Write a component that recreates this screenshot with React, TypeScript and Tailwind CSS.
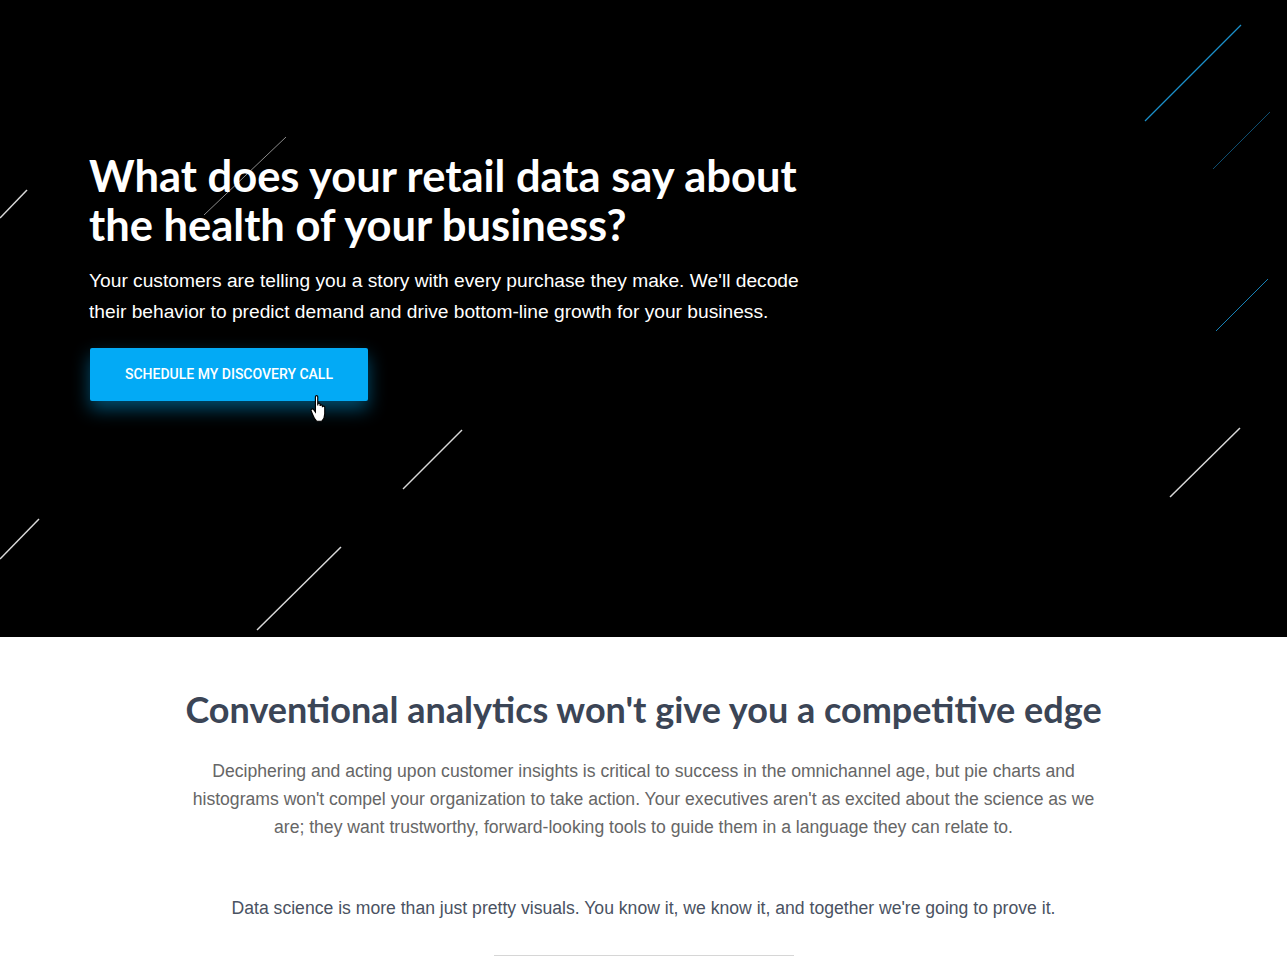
import React from "react";

const lines = [
  { x1: 0, y1: 218, x2: 27, y2: 190, c: "#d9d9d9", w: 1.5 },
  { x1: 204, y1: 215, x2: 286, y2: 137, c: "#8a8a8a", w: 1 },
  { x1: 403, y1: 489, x2: 462, y2: 430, c: "#d9d9d9", w: 1.5 },
  { x1: 0, y1: 559, x2: 39, y2: 519, c: "#d9d9d9", w: 1.5 },
  { x1: 257, y1: 630, x2: 341, y2: 547, c: "#d9d9d9", w: 1.5 },
  { x1: 1170, y1: 497, x2: 1240, y2: 428, c: "#d9d9d9", w: 1.5 },
  { x1: 1145, y1: 121, x2: 1241, y2: 25, c: "#1b8fc9", w: 1.2 },
  { x1: 1213, y1: 169, x2: 1270, y2: 112, c: "#0f4e70", w: 1 },
  { x1: 1216, y1: 331, x2: 1268, y2: 279, c: "#1680b5", w: 1 },
];

function Streaks() {
  return (
    <svg
      className="absolute inset-0 pointer-events-none"
      width="1287"
      height="637"
      viewBox="0 0 1287 637"
    >
      {lines.map((l, i) => (
        <line
          key={i}
          x1={l.x1}
          y1={l.y1}
          x2={l.x2}
          y2={l.y2}
          stroke={l.c}
          strokeWidth={l.w}
        />
      ))}
    </svg>
  );
}

// pointer cursor caught in the screenshot
function HandCursor() {
  return (
    <svg
      className="absolute left-[220px] top-[47px] pointer-events-none"
      width="19"
      height="28"
      viewBox="0 0 16 24"
    >
      <path
        d="M4.5 1.5 Q4.5 0.5 5.5 0.5 Q6.5 0.5 6.5 1.5 V9 V8 Q6.5 7 7.5 7 Q8.5 7 8.5 8 V9.5 Q8.5 8.5 9.5 8.5 Q10.5 8.5 10.5 9.5 V10.5 Q10.5 9.5 11.5 9.5 Q12.5 9.5 12.5 10.5 V16 Q12.5 20 10 22.5 H5.5 Q3.5 20.5 2 16.5 L0.8 13.5 Q0.5 12.5 1.5 12 Q2.5 11.8 3 12.5 L4.5 14.5 Z"
        fill="#fff"
        stroke="#000"
        strokeWidth="1"
      />
    </svg>
  );
}

export default function App() {
  return (
    <div className="w-full bg-white">
      <section className="relative h-[637px] bg-black overflow-hidden">
        <Streaks />
        <div className="relative pl-[89px] pt-[151px]">
          <h1 className="font-['Lato',sans-serif] font-bold text-[43.5px] leading-[49px] text-white">
            What does your retail data say about
            <br />
            the health of your business?
          </h1>
          <p className="mt-[16px] font-['Liberation_Sans',Arial,sans-serif] text-[19.2px] leading-[31px] text-white">
            Your customers are telling you a story with every purchase they make. We'll decode
            <br />
            their behavior to predict demand and drive bottom-line growth for your business.
          </p>
          <div className="relative mt-[21px] ml-px w-[278px]">
            <button className="w-[278px] h-[53px] rounded-[2px] bg-[#03aaf5] text-white font-['Roboto',sans-serif] font-medium text-[14px] uppercase shadow-[0_8px_18px_rgba(3,170,245,0.45)]">
              Schedule my discovery call
            </button>
            <HandCursor />
          </div>
        </div>
      </section>
      <section className="flex flex-col items-center pt-[50px]">
        <h2 className="font-['Lato',sans-serif] font-bold text-[36px] leading-[44px] text-[#3b4556]">
          Conventional analytics won't give you a competitive edge
        </h2>
        <p className="mt-[26px] w-[910px] text-center font-['Liberation_Sans',Arial,sans-serif] text-[17.6px] leading-[28px] text-[#666]">
          Deciphering and acting upon customer insights is critical to success in the omnichannel age, but pie charts and
          histograms won't compel your organization to take action. Your executives aren't as excited about the science as we
          are; they want trustworthy, forward-looking tools to guide them in a language they can relate to.
        </p>
        <p className="mt-[53px] text-center font-['Liberation_Sans',Arial,sans-serif] text-[17.6px] leading-[28px] text-[#4a5262]">
          Data science is more than just pretty visuals. You know it, we know it, and together we're going to prove it.
        </p>
        <div className="mt-[33px] w-[300px] h-px bg-[#d6d6d6]" />
      </section>
    </div>
  );
}
